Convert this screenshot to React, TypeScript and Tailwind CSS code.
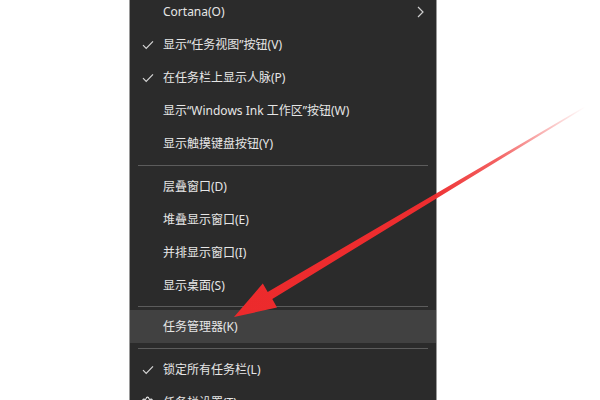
import { Settings } from 'lucide-react';

type Item = { label: string; checked?: boolean; submenu?: boolean; active?: boolean };

const FONT = { fontFamily: '"Noto Sans", "Noto Sans CJK SC", sans-serif' };

function Check() {
  return (
    <svg width="12" height="10" viewBox="0 0 12 10" fill="none">
      <path d="M1 5.2 L4.2 8.4 L11 1.4" stroke="#d6d6d6" strokeWidth="1.2" />
    </svg>
  );
}

function Row({ label, checked, submenu, active }: Item) {
  return (
    <div className={`flex h-[33px] shrink-0 items-center ${active ? 'bg-[#414141]' : ''}`}>
      <div className="flex w-[33px] shrink-0 items-center justify-center pl-[2px]">
        {checked && <Check />}
      </div>
      <span className="flex-1 whitespace-nowrap text-[12px] text-[#e6e6e6]">{label}</span>
      {submenu && (
        <svg className="mr-[12px]" width="7" height="12" viewBox="0 0 7 12" fill="none">
          <path d="M1 1 L6 6 L1 11" stroke="#cfcfcf" strokeWidth="1.2" />
        </svg>
      )}
    </div>
  );
}

function Separator({ h }: { h: string }) {
  return (
    <div className={`flex shrink-0 items-center px-[8px] ${h}`}>
      <div className="h-px w-full bg-[#5c5c5c]" />
    </div>
  );
}

function Arrow() {
  return (
    <svg className="pointer-events-none absolute left-0 top-0" width="600" height="400" viewBox="0 0 600 400">
      <defs>
        <linearGradient id="fade" gradientUnits="userSpaceOnUse" x1="585" y1="107" x2="234" y2="317">
          <stop offset="0" stopColor="#f04040" stopOpacity="0" />
          <stop offset="0.25" stopColor="#f03a3a" stopOpacity="0.8" />
          <stop offset="0.45" stopColor="#ee2d2f" />
          <stop offset="1" stopColor="#ec2a2c" />
        </linearGradient>
      </defs>
      <polygon
        fill="url(#fade)"
        points="585.3,107.4 272.3,299 277,307.5 234,317 262.8,283.6 267.7,292 584.7,106.6"
      />
    </svg>
  );
}

export default function App() {
  const top: Item[] = [
    { label: 'Cortana(O)', submenu: true },
    { label: '显示“任务视图”按钮(V)', checked: true },
    { label: '在任务栏上显示人脉(P)', checked: true },
    { label: '显示“Windows Ink 工作区”按钮(W)' },
    { label: '显示触摸键盘按钮(Y)' },
  ];
  const windows: Item[] = [
    { label: '层叠窗口(D)' },
    { label: '堆叠显示窗口(E)' },
    { label: '并排显示窗口(I)' },
    { label: '显示桌面(S)' },
  ];

  return (
    <div className="relative h-[400px] w-[600px] overflow-hidden bg-white" style={FONT}>
      <div className="ml-[129px] -mt-[5px] flex h-[440px] w-[308px] flex-col border-x border-[#9a9a9a] bg-[#2b2b2b]">
        {top.map((it) => (
          <Row key={it.label} {...it} />
        ))}
        <Separator h="h-[10px]" />
        {windows.map((it) => (
          <Row key={it.label} {...it} />
        ))}
        <Separator h="h-[8px]" />
        <Row label="任务管理器(K)" active />
        <Separator h="h-[10px]" />
        <Row label="锁定所有任务栏(L)" checked />
        <div className="flex h-[33px] shrink-0 items-center">
          <div className="flex w-[33px] shrink-0 items-center justify-center pl-[2px]">
            <Settings size={13} color="#e6e6e6" strokeWidth={2} />
          </div>
          <span className="text-[12px] text-[#e6e6e6]">任务栏设置(T)</span>
        </div>
      </div>
      <Arrow />
    </div>
  );
}
